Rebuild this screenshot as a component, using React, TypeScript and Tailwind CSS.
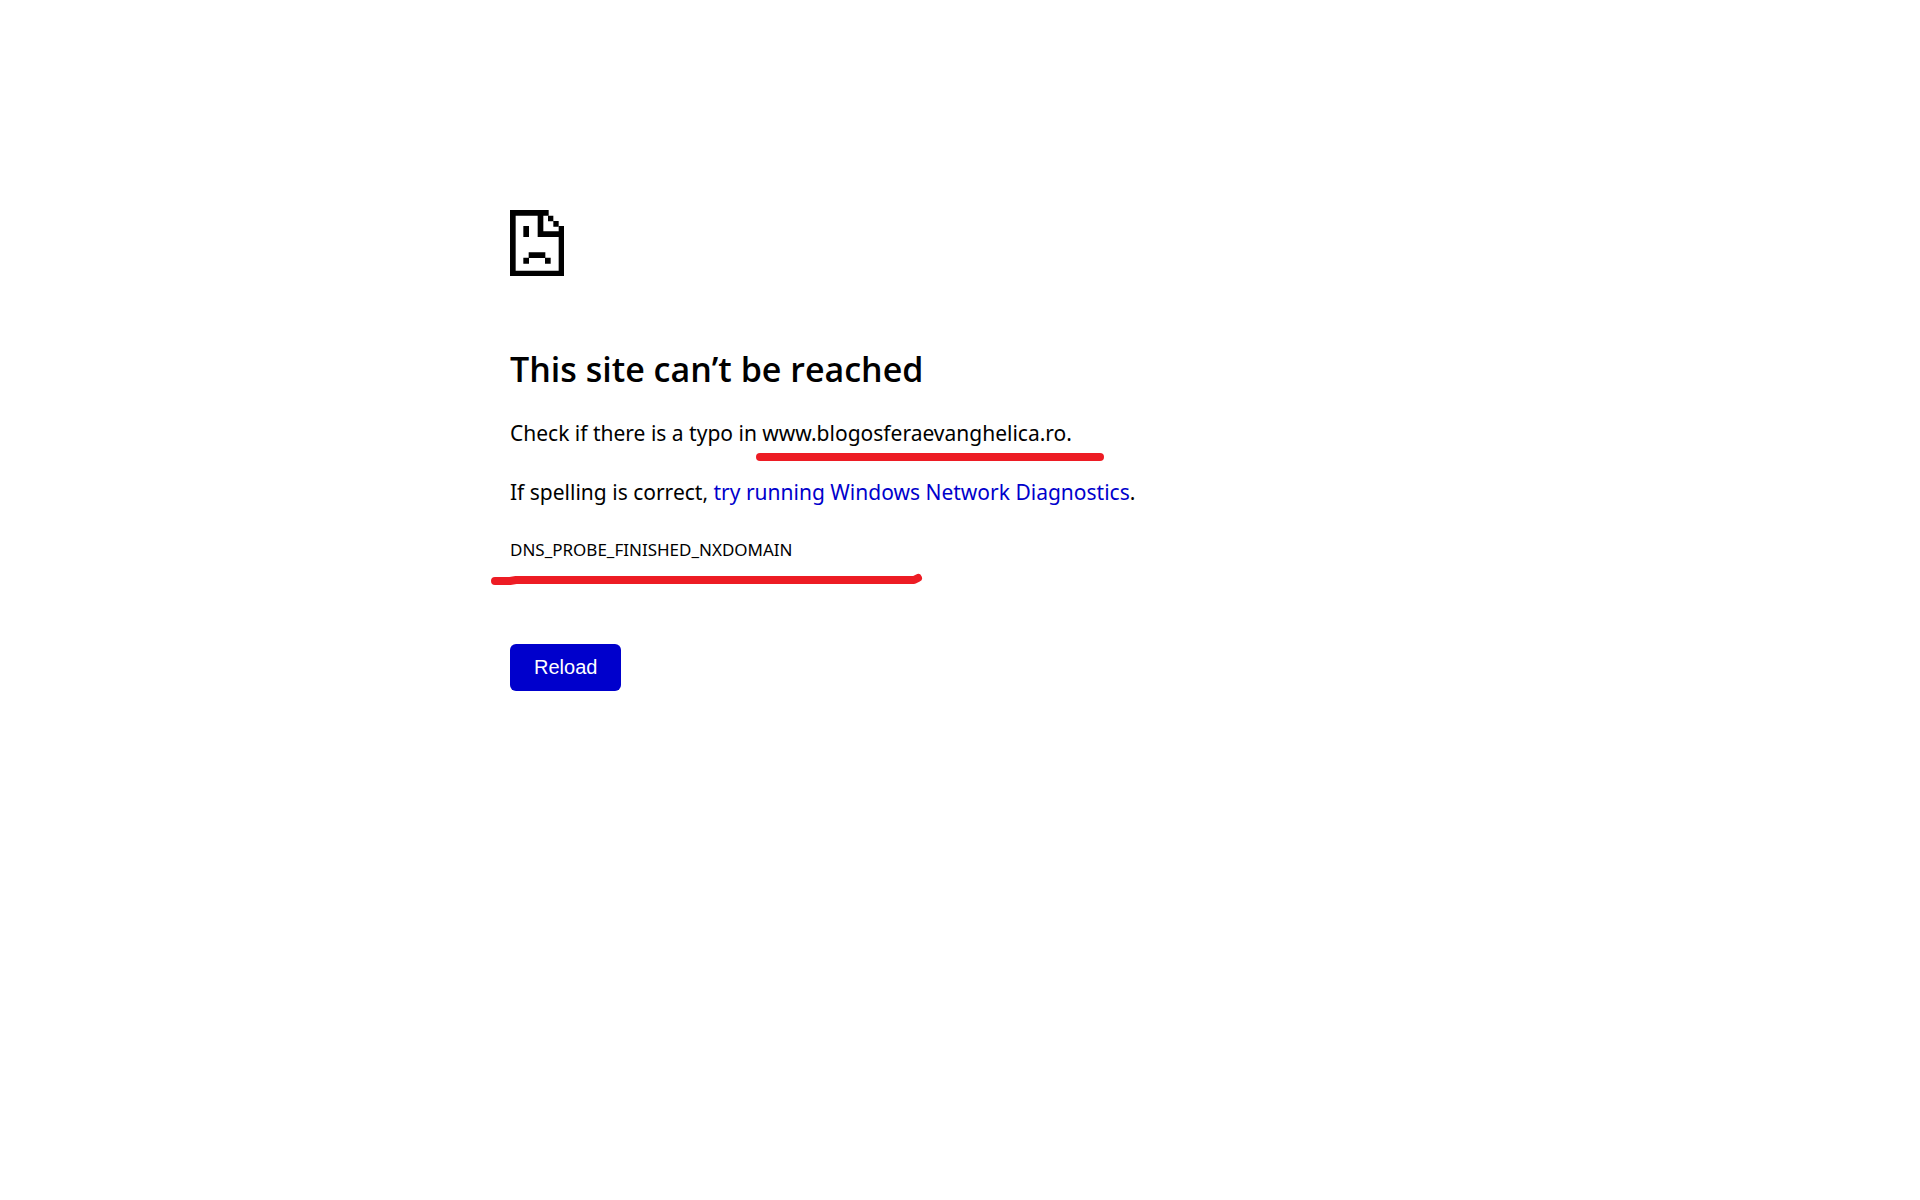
function SadPageIcon() {
  return (
    <svg width="54" height="66" viewBox="0 0 162 198" fill="#000" aria-hidden="true">
      {/* Page outline */}
      <path d="M0 0H116V17H17V182H146V48H162V198H0Z" />
      {/* Folded corner */}
      <path d="M83 0H100V64H162V81H83Z" />
      <path d="M114 17H130V34H114ZM130 33H146V50H130Z" />
      {/* Face */}
      <path d="M40 48H57V81H40Z" />
      <path d="M56 127H106V144H56ZM40 143H57V161H40ZM105 143H122V161H105Z" />
    </svg>
  );
}

export default function App() {
  return (
    <main className="min-h-screen w-full bg-white text-black font-['Noto_Sans','Open_Sans',sans-serif]">
      <div className="mx-auto flex w-full max-w-[900px] flex-col items-start pt-[210px]">
        <SadPageIcon />

        <h1 className="mt-[68px] font-['Open_Sans',sans-serif] text-[34px] leading-[50px] font-semibold">This site can’t be reached</h1>

        <p className="relative mt-6 text-[21px] leading-[30px]">
          Check if there is a typo in www.blogosferaevanghelica.ro.
          <svg className="absolute top-[33px] left-[244px]" width="352" height="12" viewBox="0 0 352 12" fill="none" aria-hidden="true">
            <path d="M6 6H346" stroke="#ed1c24" strokeWidth="8" strokeLinecap="round" />
          </svg>
        </p>

        <p className="mt-[29px] text-[21px] leading-[30px]">
          If spelling is correct,{' '}
          <a href="#diagnostics" className="text-[#0000cc]">try running Windows Network Diagnostics</a>.
        </p>

        <div className="relative mt-[31px] text-[17px] leading-6">
          DNS_PROBE_FINISHED_NXDOMAIN
          <svg className="absolute top-[34px] -left-5" width="434" height="16" viewBox="0 0 434 16" fill="none" aria-hidden="true">
            <path d="M5 9H20L26 8H424L428 6" stroke="#ed1c24" strokeWidth="8" strokeLinecap="round" strokeLinejoin="round" />
          </svg>
        </div>

        <button
          type="button"
          className="mt-[82px] rounded-md bg-[#0000cc] px-6 py-[9px] font-['Liberation_Sans',Arial,sans-serif] text-[20px] leading-[29px] text-white"
        >
          Reload
        </button>
      </div>
    </main>
  );
}
